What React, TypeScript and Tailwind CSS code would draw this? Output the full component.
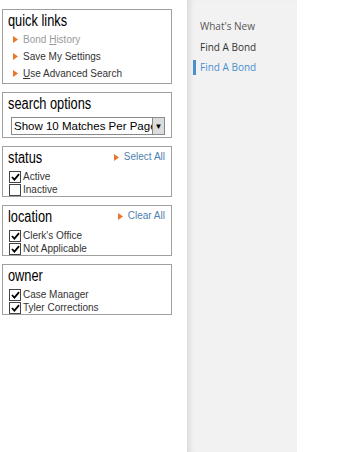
import React from "react";

const small = { fontFamily: '"Liberation Sans", Arial, sans-serif' };

function Arrow() {
  return (
    <svg width="5" height="7" viewBox="0 0 5 7" className="shrink-0">
      <path d="M0 0 L5 3.5 L0 7 Z" fill="#e8762b" />
    </svg>
  );
}

function Check({ checked }: { checked: boolean }) {
  return (
    <span className="inline-flex h-[12px] w-[12px] shrink-0 items-center justify-center border border-[#444] bg-white">
      {checked && (
        <svg width="9" height="8" viewBox="0 0 10 9">
          <path d="M1 4.5 L3.8 7.5 L9 1.2" stroke="#000" strokeWidth="2" fill="none" />
        </svg>
      )}
    </span>
  );
}

function Box({ title, action, children }: { title: string; action?: string; children: React.ReactNode }) {
  return (
    <div className="border border-[#a0a0a0] bg-white px-[5px] pt-[2px]">
      <div className="flex items-start justify-between">
        <div
          className="origin-left scale-x-[0.8] whitespace-nowrap text-[16px] leading-[18px] text-black"
          style={small}
        >
          {title}
        </div>
        {action && (
          <div className="mr-[1px] mt-[2px] flex items-center gap-[5px] text-[10px] leading-[12px] text-[#4f7fb0]" style={small}>
            <Arrow />
            <span>{action}</span>
          </div>
        )}
      </div>
      {children}
    </div>
  );
}

function CheckRow({ label }: { label: string }) {
  return (
    <div className="flex h-[13px] items-center gap-[2px] text-[10px] text-[#333]" style={small}>
      <Check checked={label !== "Inactive"} />
      <span>{label}</span>
    </div>
  );
}

function Checks({ a, b }: { a: string; b: string }) {
  return (
    <div className="flex flex-col pl-[1px] pt-[3px]">
      <CheckRow label={a} />
      <CheckRow label={b} />
    </div>
  );
}

export default function App() {
  return (
    <div className="flex h-[452px] w-[364px] bg-white">
      <div className="flex w-[187px] flex-col gap-[8px] pl-[2px] pt-[9px]">
        <div className="w-[170px]">
          <Box title="quick links">
            <div className="flex flex-col gap-[3px] pb-[3px] pl-[5px] pt-[2px] text-[10px]" style={small}>
              <div className="flex h-[14px] items-center gap-[5px] text-[#9a9a9a]">
                <Arrow />
                <span>Bond <u>H</u>istory</span>
              </div>
              <div className="flex h-[14px] items-center gap-[5px] text-[#333]">
                <Arrow />
                <span>Save My Settings</span>
              </div>
              <div className="flex h-[14px] items-center gap-[5px] text-[#333]">
                <Arrow />
                <span><u>U</u>se Advanced Search</span>
              </div>
            </div>
          </Box>
        </div>
        <div className="w-[170px]">
          <Box title="search options">
            <div className="mb-[2px] ml-[3px] mt-[4px] flex h-[18px] w-[154px] border border-[#8a8a8a] bg-white">
              <div className="flex-1 overflow-hidden whitespace-nowrap pl-[2px] text-[11.5px] leading-[16px] text-black" style={small}>
                Show 10 Matches Per Page
              </div>
              <div className="flex w-[12px] items-center justify-center border-l border-[#8a8a8a] bg-[#dcdcdc] text-[8px] text-black">
                ▼
              </div>
            </div>
          </Box>
        </div>
        <div className="w-[170px]">
          <Box title="status" action="Select All">
            <Checks a="Active" b="Inactive" />
          </Box>
        </div>
        <div className="w-[170px]">
          <Box title="location" action="Clear All">
            <Checks a="Clerk's Office" b="Not Applicable" />
          </Box>
        </div>
        <div className="w-[170px]">
          <Box title="owner">
            <Checks a="Case Manager" b="Tyler Corrections" />
          </Box>
        </div>
      </div>
      <div
        className="flex h-[452px] w-[110px] flex-col bg-[#f2f2f2] pt-[18px] text-[10px]"
        style={{ fontFamily: '"Open Sans", "Noto Sans", sans-serif', boxShadow: "inset 6px 0 6px -4px rgba(0,0,0,0.12)" }}
      >
        <div className="h-[21px] pl-[13px] leading-[16px] text-[#555]">What's New</div>
        <div className="h-[20px] pl-[13px] leading-[16px] text-[#333]">Find A Bond</div>
        <div className="flex h-[16px] items-center">
          <div className="ml-[6px] h-[15px] w-[3px] bg-[#4a90d0]" />
          <div className="pl-[4px] leading-[16px] text-[#4a90d0]">Find A Bond</div>
        </div>
      </div>
    </div>
  );
}
